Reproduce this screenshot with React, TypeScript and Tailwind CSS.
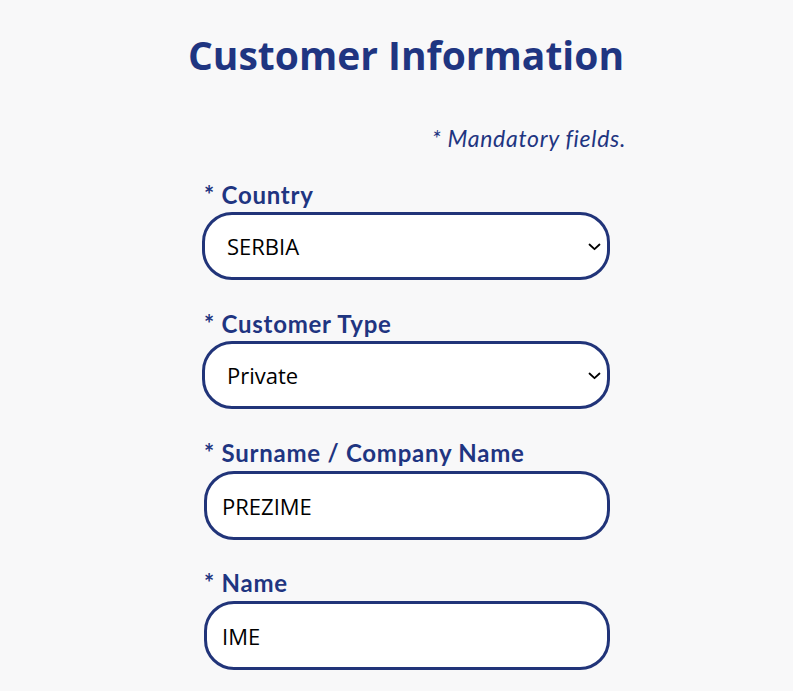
const labelCls = "block text-[24px] leading-[28px] font-bold tracking-[0.75px] text-[#1f3581] font-['Lato',sans-serif]"

function Chevron() {
  return (
    <svg
      className="pointer-events-none absolute right-[9px] top-[31px]"
      width="13"
      height="8"
      viewBox="0 0 13 8"
      fill="none"
    >
      <polyline points="1.5,1.5 6.5,6.2 11.5,1.5" stroke="black" strokeWidth="1.8" strokeLinecap="round" strokeLinejoin="round" />
    </svg>
  )
}

function SelectField({ label, value, options }: { label: string; value: string; options: string[] }) {
  return (
    <div className="mb-[30px]">
      <label className={labelCls + " pl-[2px]"}>{label}</label>
      <div className="relative mt-[3px] w-[408px]">
        <select
          defaultValue={value}
          className="appearance-none w-full h-[68px] rounded-[30px] border-[3px] border-[#213479] bg-white pl-[22px] text-[22px] text-black font-['Open_Sans',sans-serif] outline-none"
        >
          {options.map((o) => (
            <option key={o}>{o}</option>
          ))}
        </select>
        <Chevron />
      </div>
    </div>
  )
}

function TextField({ label, value }: { label: string; value: string }) {
  return (
    <div className="mb-[29px] pl-[2px]">
      <label className={labelCls}>{label}</label>
      <input
        defaultValue={value}
        className="mt-[4px] block w-[406px] h-[69px] rounded-[30px] border-[3px] border-[#213479] bg-white pl-[15px] text-[22px] text-black font-['Open_Sans',sans-serif] outline-none"
      />
    </div>
  )
}

export default function App() {
  return (
    <div className="min-h-[691px] bg-[#f8f8f9] flex justify-center pl-[19px]">
      <div className="w-[440px] pt-[31px]">
        <h1 className="text-center text-[39px] leading-[48px] font-bold text-[#1f3581] font-['Open_Sans',sans-serif]">
          Customer Information
        </h1>
        <p className="mt-[45px] text-right text-[23px] leading-[28px] italic tracking-[0.7px] text-[#1f3581] font-['Lato',sans-serif]">
          * Mandatory fields.
        </p>
        <form className="mt-[29px] pl-[16px]">
          <SelectField label="* Country" value="SERBIA" options={["SERBIA", "CROATIA", "MONTENEGRO"]} />
          <SelectField label="* Customer Type" value="Private" options={["Private", "Company"]} />
          <TextField label="* Surname / Company Name" value="PREZIME" />
          <TextField label="* Name" value="IME" />
        </form>
      </div>
    </div>
  )
}
